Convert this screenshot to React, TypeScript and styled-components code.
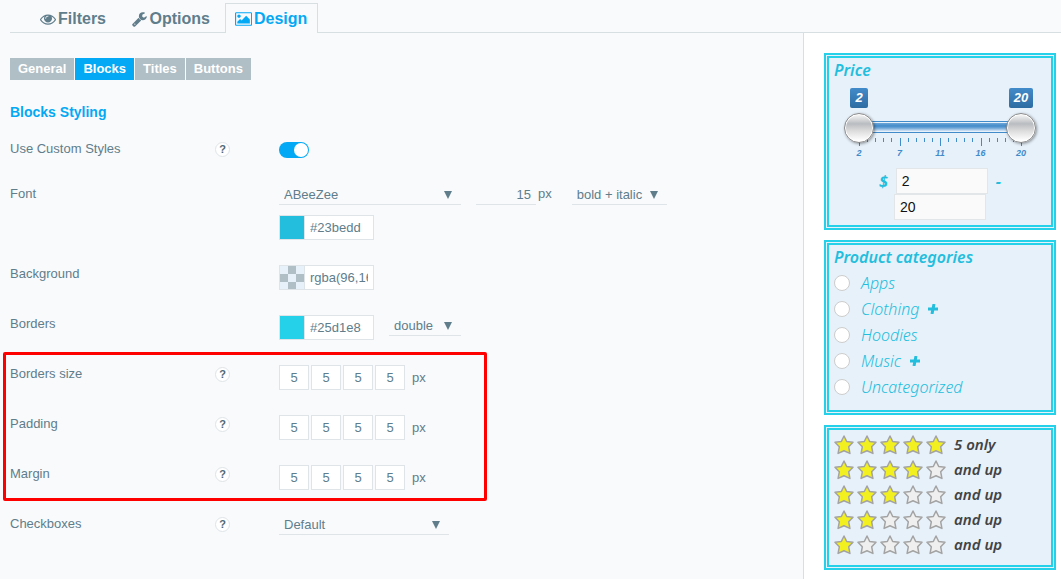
import React, { useId, useState } from "react";
import styled, { createGlobalStyle, css } from "styled-components";

const GlobalStyle = createGlobalStyle`
  *, *::before, *::after { box-sizing: border-box; }
  body {
    margin: 0;
    background: #f9fafc;
    color: #607d8b;
    font: 13px/20px "Liberation Sans", Arial, sans-serif;
  }
  button, input, select { font: inherit; color: inherit; margin: 0; }
`;

const Page = styled.div`
  display: flex;
  flex-direction: column;
  min-height: 100vh;
`;

const TabBar = styled.nav`
  display: flex;
  align-items: flex-end;
  gap: 5px;
  margin-left: 10px;
  padding: 3px 0 0 20px;
  box-shadow: inset 0 -1px #d8dfe3;
`;

const Tab = styled.a<{ $active?: boolean }>`
  display: flex;
  align-items: center;
  gap: 2px;
  height: 30px;
  padding: 0 10px 0 9px;
  border: 1px solid transparent;
  border-bottom: 0;
  font-size: 16px;
  font-weight: bold;
  color: inherit;
  text-decoration: none;
  ${(p) =>
    p.$active &&
    css`
      margin-left: -1px;
      border-color: #d8dfe3;
      background: #f9fafc;
      color: #03a9f4;
    `}
  svg { height: 16px; fill: currentColor; }
`;

const Columns = styled.div`
  display: flex;
  flex: 1;
`;

const Settings = styled.main`
  flex: 1;
  min-width: 0;
  padding: 25px 10px 0;
`;

const SubTabs = styled.div`
  display: flex;
  gap: 1px;
`;

const SubTab = styled.button<{ $active?: boolean }>`
  height: 22px;
  padding: 0 8px;
  border: 0;
  background: ${(p) => (p.$active ? "#03a9f4" : "#b0bec5")};
  color: #fff;
  font-weight: bold;
`;

const SectionTitle = styled.h2`
  margin: 22px 0 17px;
  color: #03a9f4;
  font-size: 14px;
  line-height: 20px;
`;

const Row = styled.div`
  display: grid;
  grid-template-columns: 205px 64px 1fr;
  align-items: start;
  padding-bottom: 24px;
`;

const Help = styled.button`
  width: 15px;
  height: 15px;
  margin-top: 3px;
  padding: 0;
  border: 1px solid #dfe4e8;
  border-radius: 50%;
  background: #fff;
  color: #4f6a77;
  font-size: 11px;
  line-height: 13px;
  font-weight: bold;
  text-align: center;
`;

const Controls = styled.div`
  display: flex;
  flex-direction: column;
  gap: 10px;
  grid-column: 3;
`;

const Line = styled.div`
  display: flex;
  align-items: flex-start;
  gap: 15px;
`;

const BoxLine = styled(Line)`
  padding-top: 1px;
`;

const Switch = styled.input`
  appearance: none;
  display: flex;
  justify-content: flex-end;
  width: 30px;
  height: 16px;
  margin: 3px 0 2px;
  padding: 1px;
  border-radius: 8px;
  background: #b0bec5;
  &::before {
    content: "";
    width: 14px;
    height: 14px;
    border-radius: 50%;
    background: #fff;
  }
  &:not(:checked) { justify-content: flex-start; }
  &:checked { background: #03a9f4; }
`;

const SelectBox = styled.div<{ $width: number }>`
  display: grid;
  align-items: center;
  width: ${(p) => p.$width}px;
  height: 21px;
  border-bottom: 1px solid #dfe4e8;
  &::after {
    content: "";
    grid-area: 1 / 1;
    justify-self: end;
    margin: 2px 9px 0 0;
    border: solid transparent;
    border-width: 8px 4px 0;
    border-top-color: #607d8b;
    pointer-events: none;
  }
  select {
    appearance: none;
    grid-area: 1 / 1;
    width: 100%;
    height: 20px;
    padding: 1px 5px 0;
    border: 0;
    background: transparent;
  }
`;

const SizeField = styled.label`
  display: flex;
  gap: 2px;
  margin-right: 5px;
  input {
    width: 60px;
    height: 21px;
    padding: 0 5px;
    border: 0;
    border-bottom: 1px solid #dfe4e8;
    background: transparent;
    text-align: right;
  }
`;

const ColorBox = styled.div`
  display: flex;
  width: 95px;
  height: 25px;
  border: 1px solid #dfe4e8;
  background: #fff;
  input {
    width: 69px;
    padding: 0 5px;
    border: 0;
    border-left: 1px solid #dfe4e8;
    background: transparent;
  }
`;

const Swatch = styled.button<{ $fill: string }>`
  width: 24px;
  height: 23px;
  padding: 0;
  border: 0;
  background: ${(p) => p.$fill};
`;

const Sides = styled.fieldset`
  display: flex;
  align-items: center;
  gap: 2px;
  margin: 0;
  padding: 1px 0 0;
  border: 0;
  input {
    width: 30px;
    height: 25px;
    padding: 0;
    border: 1px solid #dfe4e8;
    background: #fff;
    text-align: center;
  }
  span { margin-left: 5px; }
`;

const Highlight = styled.section`
  position: relative;
  &::after {
    content: "";
    position: absolute;
    top: -12px;
    bottom: 13px;
    left: -7px;
    width: 484px;
    border: 3px solid #ff0000;
    border-radius: 2px;
    pointer-events: none;
  }
`;

const Sidebar = styled.aside`
  display: flex;
  flex-direction: column;
  gap: 10px;
  width: 258px;
  padding: 20px 5px 9px 20px;
  border-left: 1px solid #d8dfe3;
  background: #fff;
`;

const Widget = styled.section`
  padding: 5px;
  border: 5px double #25d1e8;
  background: #e7f1fa;
  color: #23bedd;
  font-family: "Noto Sans", "Open Sans", sans-serif;
  font-style: italic;
`;

const WidgetTitle = styled.h3`
  margin: 0;
  font-size: 16px;
  font-weight: 600;
  line-height: 15px;
`;

const Slider = styled.div`
  margin: 0 10px;
  font-family: "Liberation Sans", Arial, sans-serif;
  font-weight: bold;
`;

const Spread = styled.div`
  display: flex;
  justify-content: space-between;
`;

const Bubbles = styled(Spread)`
  padding-top: 10px;
`;

const BubbleSlot = styled.div`
  display: flex;
  justify-content: center;
  width: 30px;
`;

const Bubble = styled.output`
  padding: 0 5px;
  border-radius: 2px;
  background: linear-gradient(#428bca, #2d6ca2);
  color: #fff;
  font-size: 13px;
  line-height: 20px;
`;

const thumb = css`
  appearance: none;
  width: 30px;
  height: 30px;
  border: 1px solid #8a8a8a;
  border-radius: 50%;
  background: linear-gradient(#f2f2f2 5%, #b9bcc0 35%, #dcdcdc 60%, #ffffff 95%);
  box-shadow: 1px 1px 3px rgba(0, 0, 0, 0.4), inset 0 0 0 1px #fff;
  pointer-events: auto;
`;

const Rail = styled.div`
  position: relative;
  z-index: 1;
  display: grid;
  height: 30px;
  margin-top: 5px;
  align-items: center;
  &::before {
    content: "";
    grid-area: 1 / 1;
    height: 12px;
    margin: 0 15px 2px;
    border: solid #428bca;
    border-width: 1px 0;
    background: linear-gradient(#e7f1fa 1px, #6ea6d8 1px, #428bca 4px, #6ea6d8 6px, #d3e4f4 9px, #e7f1fa 9px);
  }
  input {
    appearance: none;
    grid-area: 1 / 1;
    width: 100%;
    height: 30px;
    background: transparent;
    pointer-events: none;
    &::-webkit-slider-thumb { ${thumb} }
    &::-moz-range-thumb { ${thumb} }
  }
`;

const Ticks = styled.svg`
  display: block;
  width: 100%;
  height: 9px;
  margin-top: -5px;
  stroke: #428bca;
`;

const Scale = styled(Spread)`
  color: #428bca;
  font-size: 9px;
  line-height: 12px;
  span { width: 30px; text-align: center; }
`;

const PriceFields = styled.div`
  display: flex;
  flex-direction: column;
  align-items: center;
  margin-top: 9px;
  font-size: 16px;
  font-weight: bold;
  div { display: flex; align-items: center; gap: 8px; }
  input {
    width: 92px;
    height: 26px;
    padding: 0 5px;
    border: 1px solid #e2e6e8;
    background: #fafafa;
    color: #111;
    font: 14px "Liberation Sans", Arial, sans-serif;
  }
`;

const Categories = styled.ul`
  margin: 5px 0 0;
  padding: 0 0 5px;
  list-style: none;
  li {
    display: flex;
    align-items: center;
    gap: 9px;
    height: 26px;
  }
  label {
    display: flex;
    align-items: center;
    gap: 11px;
    font-size: 16px;
    font-weight: 300;
  }
  input {
    appearance: none;
    width: 16px;
    height: 16px;
    border: 1px solid #ccc;
    border-radius: 50%;
    background: #fff;
  }
  input:checked { background: #23bedd; }
`;

const Expand = styled.button`
  display: flex;
  padding: 0;
  border: 0;
  background: none;
  svg { width: 10px; height: 10px; stroke: #23bedd; stroke-width: 3; }
`;

const Ratings = styled.ul`
  margin: 0;
  padding: 0;
  list-style: none;
  color: #434343;
  font-size: 15px;
  font-weight: 600;
  line-height: 18px;
  a {
    display: flex;
    align-items: flex-start;
    height: 25px;
    gap: 3px;
    color: inherit;
    text-decoration: none;
  }
  svg { width: 20px; height: 20px; }
  span { margin-left: 5px; }
`;

const EyeIcon = () => (
  <svg viewBox="0 0 1792 1792" aria-hidden="true">
    <path d="M1664 960q-152-236-381-353 61 104 61 225 0 185-131.5 316.5t-316.5 131.5-316.5-131.5-131.5-316.5q0-121 61-225-229 117-381 353 133 205 333.5 326.5t434.5 121.5 434.5-121.5 333.5-326.5zm-720-384q0-20-14-34t-34-14q-125 0-214.5 89.5t-89.5 214.5q0 20 14 34t34 14 34-14 14-34q0-86 61-147t147-61q20 0 34-14t14-34zm848 384q0 34-20 69-140 230-376.5 368.5t-499.5 138.5-499.5-139-376.5-368q-20-35-20-69t20-69q140-229 376.5-368t499.5-139 499.5 139 376.5 368q20 35 20 69z" />
  </svg>
);

const WrenchIcon = () => (
  <svg viewBox="64 0 1728 1792" aria-hidden="true">
    <path d="M448 1472q0-26-19-45t-45-19-45 19-19 45 19 45 45 19 45-19 19-45zm644-420l-682 682q-37 37-90 37-52 0-91-37l-106-108q-38-36-38-90 0-53 38-91l681-681q39 98 114.5 173.5t173.5 114.5zm634-435q0 39-23 106-47 134-164.5 217.5t-258.5 83.5q-185 0-316.5-131.5t-131.5-316.5 131.5-316.5 316.5-131.5q58 0 121.5 16.5t107.5 46.5q16 11 16 28t-16 28l-293 169v224l193 107q5-3 79-48.5t135.5-81 70.5-35.5q15 0 23.5 10t8.5 25z" />
  </svg>
);

const PictureIcon = () => (
  <svg viewBox="-64 0 1920 1792" aria-hidden="true">
    <path d="M576 576q0 80-56 136t-136 56-136-56-56-136 56-136 136-56 136 56 56 136zm1024 384v448h-1408v-192l320-320 160 160 512-512zm96-704h-1600q-13 0-22.5 9.5t-9.5 22.5v1216q0 13 9.5 22.5t22.5 9.5h1600q13 0 22.5-9.5t9.5-22.5v-1216q0-13-9.5-22.5t-22.5-9.5zm160 32v1216q0 66-47 113t-113 47h-1600q-66 0-113-47t-47-113v-1216q0-66 47-113t113-47h1600q66 0 113 47t47 113z" />
  </svg>
);

const Star = ({ on }: { on: boolean }) => (
  <svg viewBox="0 0 20 20" aria-hidden="true">
    <path
      d="M10 1L12.7 6.5L19 7.2L14.7 11.8L15.9 18.4L10 15.7L4.1 18.4L5.3 11.8L1 7.2L7.3 6.5Z"
      fill={on ? "#f2f01e" : "#efefef"}
      stroke="#a3a3a3"
      strokeWidth="1.5"
      strokeLinejoin="round"
    />
  </svg>
);

type DropProps = { label: string; value: string; options: string[]; width: number; id?: string };

const Drop = ({ label, value, options, width, id }: DropProps) => (
  <SelectBox $width={width}>
    <select id={id} aria-label={label} defaultValue={value}>
      {options.map((o) => (
        <option key={o}>{o}</option>
      ))}
    </select>
  </SelectBox>
);

const ColorField = ({ label, value, fill, id }: { label: string; value: string; fill: string; id?: string }) => (
  <ColorBox>
    <Swatch type="button" aria-label={`Pick ${label}`} $fill={fill} />
    <input id={id} type="text" aria-label={label} defaultValue={value} />
  </ColorBox>
);

const HelpButton = ({ topic }: { topic: string }) => (
  <Help type="button" aria-label={`Help: ${topic}`}>
    ?
  </Help>
);

const SidesRow = ({ label }: { label: string }) => {
  const id = useId();
  return (
    <Row>
      <label htmlFor={id}>{label}</label>
      <HelpButton topic={label} />
      <Sides>
        {["top", "right", "bottom", "left"].map((side, i) => (
          <input key={side} id={i ? undefined : id} aria-label={`${label} ${side}`} type="text" defaultValue="5" />
        ))}
        <span>px</span>
      </Sides>
    </Row>
  );
};

const checker =
  "repeating-conic-gradient(#b0bec5 0 25%, #e7f1fa 0 50%) 0 0 / 16px 16px";

const PriceSlider = () => {
  const [low, setLow] = useState(2);
  const [high, setHigh] = useState(20);
  return (
    <>
      <Slider>
        <Bubbles>
          <BubbleSlot><Bubble>{low}</Bubble></BubbleSlot>
          <BubbleSlot><Bubble>{high}</Bubble></BubbleSlot>
        </Bubbles>
        <Rail>
          <input type="range" min={2} max={20} value={low} aria-label="Lowest price"
            onChange={(e) => setLow(Math.min(+e.target.value, high))} />
          <input type="range" min={2} max={20} value={high} aria-label="Highest price"
            onChange={(e) => setHigh(Math.max(+e.target.value, low))} />
        </Rail>
        <Ticks viewBox="0 0 192 9" aria-hidden="true">
          {Array.from({ length: 21 }, (_, i) => {
            const x = Math.round(15 + i * 8.1) + 0.5;
            return <line key={i} x1={x} x2={x} y1="0" y2={i % 5 ? 4 : 8} />;
          })}
        </Ticks>
        <Scale>
          {[2, 7, 11, 16, 20].map((n) => (
            <span key={n}>{n}</span>
          ))}
        </Scale>
      </Slider>
      <PriceFields>
        <div>
          <span>$</span>
          <input type="text" aria-label="From" value={low} onChange={(e) => setLow(+e.target.value || 2)} />
          <span>-</span>
        </div>
        <input type="text" aria-label="To" value={high} onChange={(e) => setHigh(+e.target.value || 20)} />
      </PriceFields>
    </>
  );
};

const categories = [
  { name: "Apps" },
  { name: "Clothing", nested: true },
  { name: "Hoodies" },
  { name: "Music", nested: true },
  { name: "Uncategorized" },
];

export default function App() {
  return (
    <Page>
      <GlobalStyle />
      <TabBar>
        <Tab href="#filters"><EyeIcon />Filters</Tab>
        <Tab href="#options"><WrenchIcon />Options</Tab>
        <Tab href="#design" $active aria-current="page"><PictureIcon />Design</Tab>
      </TabBar>
      <Columns>
        <Settings>
          <SubTabs>
            <SubTab type="button">General</SubTab>
            <SubTab type="button" $active>Blocks</SubTab>
            <SubTab type="button">Titles</SubTab>
            <SubTab type="button">Buttons</SubTab>
          </SubTabs>
          <SectionTitle>Blocks Styling</SectionTitle>
          <Row>
            <label htmlFor="custom">Use Custom Styles</label>
            <HelpButton topic="Use Custom Styles" />
            <Switch id="custom" type="checkbox" defaultChecked />
          </Row>
          <Row>
            <label htmlFor="font">Font</label>
            <Controls>
              <Line>
                <Drop id="font" label="Font" value="ABeeZee" options={["ABeeZee", "Arial"]} width={182} />
                <SizeField>
                  <input type="text" aria-label="Font size" defaultValue="15" />
                  px
                </SizeField>
                <Drop label="Font style" value="bold + italic" options={["normal", "bold", "italic", "bold + italic"]} width={95} />
              </Line>
              <ColorField label="Font color" value="#23bedd" fill="#23bedd" />
            </Controls>
          </Row>
          <Row>
            <label htmlFor="background">Background</label>
            <Controls>
              <BoxLine>
                <ColorField id="background" label="Background" value="rgba(96,169,230,0.1)" fill={checker} />
              </BoxLine>
            </Controls>
          </Row>
          <Row>
            <label htmlFor="borders">Borders</label>
            <Controls>
              <BoxLine>
                <ColorField id="borders" label="Borders" value="#25d1e8" fill="#25d1e8" />
                <Drop label="Border style" value="double" options={["solid", "dashed", "double"]} width={72} />
              </BoxLine>
            </Controls>
          </Row>
          <Highlight>
            <SidesRow label="Borders size" />
            <SidesRow label="Padding" />
            <SidesRow label="Margin" />
          </Highlight>
          <Row>
            <label htmlFor="checkboxes">Checkboxes</label>
            <HelpButton topic="Checkboxes" />
            <Drop id="checkboxes" label="Checkboxes" value="Default" options={["Default", "Round"]} width={170} />
          </Row>
        </Settings>
        <Sidebar>
          <Widget>
            <WidgetTitle>Price</WidgetTitle>
            <PriceSlider />
          </Widget>
          <Widget>
            <WidgetTitle>Product categories</WidgetTitle>
            <Categories>
              {categories.map((c) => (
                <li key={c.name}>
                  <label>
                    <input type="checkbox" />
                    {c.name}
                  </label>
                  {c.nested && (
                    <Expand type="button" aria-label={`Expand ${c.name}`}>
                      <svg viewBox="0 0 10 10"><path d="M6 0L4 10M0 5H10" /></svg>
                    </Expand>
                  )}
                </li>
              ))}
            </Categories>
          </Widget>
          <Widget>
            <Ratings>
              {[5, 4, 3, 2, 1].map((n) => (
                <li key={n}>
                  <a href={`#rating-${n}`}>
                    {[1, 2, 3, 4, 5].map((s) => (
                      <Star key={s} on={s <= n} />
                    ))}
                    <span>{n === 5 ? "5 only" : "and up"}</span>
                  </a>
                </li>
              ))}
            </Ratings>
          </Widget>
        </Sidebar>
      </Columns>
    </Page>
  );
}
